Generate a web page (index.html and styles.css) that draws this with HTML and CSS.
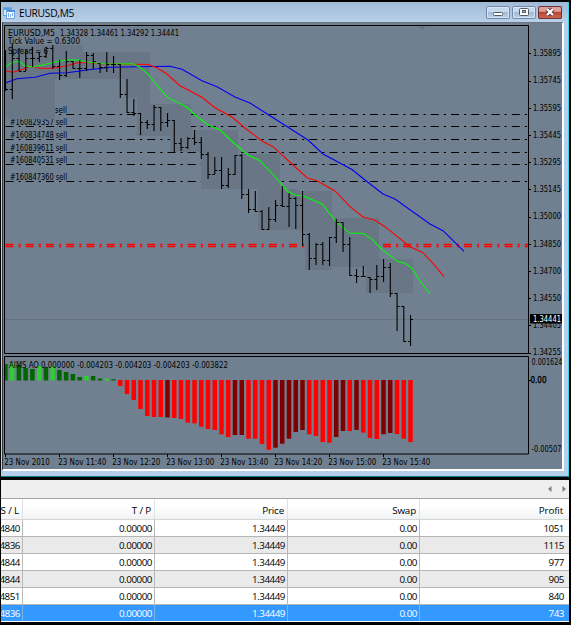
FILE: index.html
```html
<!DOCTYPE html>
<html lang="en">
<head>
<meta charset="utf-8">
<title>EURUSD,M5</title>
<link rel="stylesheet" href="styles.css">
</head>
<body>
<section class="window">
  <header class="titlebar">
    <svg class="app-icon" width="13" height="13" viewBox="0 0 13 13"><path d="M.5 1.5h8v8h-8z" fill="#d9edff" stroke="#6ba2e0"/><path d="M1 3h7" stroke="#5d9ae6" stroke-width="2"/><path d="M3.5 4.5h8v8h-8z" fill="#f8fcff" stroke="#6ba2e0"/><path d="M4 5h8" stroke="#4f8fdd" stroke-width="2"/><path d="M5.5 7v4M7.500 8v3M9.500 7v3" stroke="#79a9e8" fill="none"/></svg>
    <h1>EURUSD,M5</h1>
    <div class="controls">
      <span class="btn"><svg width="24" height="13"><rect x="7.5" y="6.5" width="9" height="3" rx="1" fill="#fff" stroke="#555b66"/></svg></span>
      <span class="btn"><svg width="24" height="13"><rect x="7.5" y="2.5" width="9" height="7" rx="1" fill="#fff" stroke="#555b66"/><rect x="10.5" y="4.5" width="3" height="2" fill="#a8bdd6" stroke="#555b66"/></svg></span>
      <span class="btn close"><svg width="24" height="13"><path d="M9 3l6 6M15 3l-6 6" stroke="#673944" stroke-width="4"/><path d="M9 3l6 6M15 3l-6 6" stroke="#fff" stroke-width="2.2"/></svg></span>
    </div>
  </header>
  <div class="frame">
    <svg class="chart" id="chart" width="558" height="446" viewBox="4 23 558 446">
      <g id="orders"></g>
      <g class="order-names">
        <text x="55" y="113" textLength="12">sell</text>
        <text x="10" y="124.5" textLength="57">#160829357 sell</text>
        <text x="10" y="138" textLength="57">#160834748 sell</text>
        <text x="10" y="150.5" textLength="57">#160839611 sell</text>
        <text x="10" y="162.5" textLength="57">#160840531 sell</text>
        <text x="10" y="180" textLength="57">#160847360 sell</text>
      </g>
      <g id="patches" class="patch"></g>
      <path class="stop" d="M5.5 244.500H305M383 244.500H528M5.500 246.500H305M383 246.500H528"/>
      <path d="M5 319.5H528" stroke="#65737f"/>
      <path class="ma blue" d="M6 82.7L17 78.7 35 77.3 50 73.3 67 72.7 87 70 110 67.3 137 66.7 170 66.3 182 69.3 202 80.7 217 86.7 235 97 250 103 270 115.7 308 140 323 154 352 169.5 365 180 383 194 395 199 430 224 443 230.7 464 251.3"/>
      <path class="ma red" d="M6 71L13 72.3 23 69.3 30 66 40 68.3 53 68.3 67 65.7 77 62.7 90 62.7 100 63.7 148 64.5 157 67.7 167 74 180 85.7 202 97.3 215 107.7 232 117 245 128 262 141 273 146.7 292 164 307 177.7 317 180.7 335 191 350 206.7 363 217 375 220.3 385 226.7 410 246.7 423 252.7 433 263.3 444 276.7"/>
      <path class="ma green" d="M6 66.7L12 62.3 19 61.3 25 66 33 66.7 43 65 55 62 67 60 78 60 88 62.3 107 64 133 63.7 140 67.3 148 74 158 86.7 168 97.7 187 107.3 195 115 208 124.7 220 130 235 144 248 155 260 160.7 278 180 288 191.7 296 195.3 303 195.7 322 204 337 222.7 350 233.3 363 233.3 372 239.3 382 249.3 397 261.3 405 263.3 412 268.3 420 281 430 294"/>
      <path id="candles" class="candle"/>
      <g id="histogram"></g>
      <path class="border" d="M4.5 25.5H528.5V353.5H4.5zM4.5 356.5H528.5V454H4.5z"/>
      <path d="M419 26.5h7l-3.5 3z" fill="#65737f"/>
      <path id="axis" class="border"/>
      <text x="8" y="35.5" textLength="47">EURUSD,M5</text><text x="60" y="35.5" textLength="119">1.34328 1.34461 1.34292 1.34441</text>
      <text x="8" y="44" textLength="72">Tick Value = 0.6300</text>
      <text x="8" y="54" textLength="40">Spread = 6</text>
      <text x="9" y="368" textLength="219">AIMS AO 0.000000 -0.004203 -0.004203 -0.004203 -0.003822</text>
      <g id="labels"></g>
      <path d="M530 314h32v9.5h-32z"/>
      <text class="current" x="533" y="321.7" textLength="28">1.34441</text>
      <text x="531.5" y="365.3" textLength="31">0.001624</text>
      <text x="530.5" y="383" textLength="16" stroke="#000" stroke-width=".3">0.00</text>
      <text x="531.5" y="451.5" textLength="30">-0.00507</text>
    </svg>
  </div>
</section>
<section class="terminal">
  <div class="toolbar"><svg width="20" height="8"><path d="M4.500 1v6L1 4zM15.500 1v6L19 4z" fill="#7d7d7d"/></svg></div>
  <div class="row head"><span>S / L</span><span>T / P</span><span>Price</span><span>Swap</span><span>Profit</span></div>
  <div class="row"><span>4840</span><span>0.00000</span><span>1.34449</span><span>0.00</span><span>1051</span></div>
  <div class="row alt"><span>4836</span><span>0.00000</span><span>1.34449</span><span>0.00</span><span>1115</span></div>
  <div class="row"><span>4844</span><span>0.00000</span><span>1.34449</span><span>0.00</span><span>977</span></div>
  <div class="row alt"><span>4844</span><span>0.00000</span><span>1.34449</span><span>0.00</span><span>905</span></div>
  <div class="row"><span>4851</span><span>0.00000</span><span>1.34449</span><span>0.00</span><span>840</span></div>
  <div class="row selected"><span>4836</span><span>0.00000</span><span>1.34449</span><span>0.00</span><span>743</span></div>
</section>
<script src="chart.js"></script>
</body>
</html>
```
FILE: styles.css
```css
* { box-sizing: border-box; }
body { margin: 0; width: 571px; height: 625px; overflow: hidden; background: #000; font-family: "Open Sans", "Noto Sans", sans-serif; }
.window { margin: 2px 2px 0 1px; height: 475px; background: #b5cfea; border-right: 1px solid #39d7e9; border-bottom: 1px solid #167d88; }
.titlebar { height: 20px; display: flex; align-items: center; padding: 1px 6px 0 2px; background: linear-gradient(#a0b9d5, #b9d0e9); }
.titlebar h1 { margin: 0 0 0 3px; flex: 1; font-size: 10.3px; font-weight: 400; line-height: 18px; color: #000; letter-spacing: -.32px; }
.controls { display: flex; gap: 2px; }
.btn { width: 24px; height: 13px; border-radius: 2px; background: linear-gradient(#c5d8ec 45%, #a2bbd6 50%, #bdd4ea); box-shadow: inset 0 0 0 1px #7289a5, inset 0 0 0 2px #d6e5f3; }
.btn svg { display: block; }
.close { background: linear-gradient(#dca196 40%, #bb4732 50%, #cc6e55); box-shadow: inset 0 0 0 1px #6b3038; }
.frame { margin: 0 4px 0 1px; width: 562px; height: 449px; padding: 0 3px 3px 1px; border: solid #fff; border-width: 0 2px 2px 0; border-top: 1px solid #6d7781; border-left: 1px solid #303a44; background: #708090; }
.chart { display: block; background: #708090; }
.chart text { font-family: "DejaVu Sans Condensed", "DejaVu Sans", sans-serif; font-size: 8px; fill: #000; }
.chart .current { fill: #fff; }
.patch { fill: #687686; }
.order { stroke: #000; stroke-width: 1; stroke-dasharray: 8 5 2.25 5; }
.stop { stroke: #f00; stroke-width: 1.7; stroke-dasharray: 8 5 2.25 5; fill: none; }
.ma { fill: none; stroke-width: 1.05; }
.blue { stroke: #0000f0; }
.red { stroke: #f00; }
.green { stroke: #0f0; }
.candle { stroke: #000; stroke-width: 1.1; fill: none; }
.border { stroke: #000; stroke-width: 1; fill: none; }
.terminal { margin: 3px 2px 0 1px; background: #fff; }
.toolbar { height: 19px; background: #efefef; border-bottom: 1px solid #a5a5a5; display: flex; align-items: center; justify-content: flex-end; padding-right: 2px; }
.row { display: grid; grid-template-columns: 22px 132px 133px 132px 1fr; height: 17px; font-size: 9.8px; letter-spacing: -.45px; line-height: 18px; color: #000; border-bottom: 1px solid #b5b5b5; }
.row span { border-right: 1px solid #b9b9b9; padding-right: 2px; display: flex; justify-content: flex-end; white-space: nowrap; height: 16px; }
.row span:last-child { border-right: 0; padding-right: 5px; }
.row span:first-child { overflow: hidden; }
.head { height: 21px; line-height: 23px; letter-spacing: -.15px; background: linear-gradient(#fff 40%, #f1f2f4); border-bottom: 1px solid #d5d5d5; }
.head span { height: 20px; border-color: #e2e3e5; padding-right: 3px; }
.head span:last-child { padding-right: 6px; }
.alt { background: #eaeaea; }
.selected { background: #3399ff; color: #fff; border-bottom-color: #fff; }
.selected span { border-color: #77b4ee; }
```
FILE: chart.js
```js
const NS = "http://www.w3.org/2000/svg";
const add = (parent, tag, attrs, text) => {
  const el = document.createElementNS(NS, tag);
  for (const k in attrs) el.setAttribute(k, attrs[k]);
  if (text) el.textContent = text;
  document.getElementById(parent).appendChild(el);
};
const barX = i => 12.3 + 6.75 * i;

[114.5, 126.5, 139.5, 152.5, 164.5, 181.5].forEach(y =>
  add("orders", "path", { class: "order", d: `M5.5 ${y}H528` }));

// left, top, right, bottom of each shaded session block
[[5,45,55,119],[55,45,83,79],[83,52,150,79],[125,79,137,98],[137,78,150,136],[150,104,191,136],[170,136,191,152],
 [191,130,238,152],[201,152,238,189],[238,154,280,189],[258,189,298,230],[280,191,332,230],[305,230,332,270],
 [332,218,379,267],[366,259,413,293]].forEach(([x, y, r, b]) =>
  add("patches", "rect", { x, y, width: r - x, height: b - y }));

// high, low, close positions, one entry per candle starting left of the first full bar
const candles = [[50,91,89],[43,99,58],[48,71,71],[50,71,58],[47,67,58],[52,62,56],[50,58,48],[45,69,66],[60,80,75],[51,77,61],[61,69,68],[60,78,68],[52,71,55],[53,69,61],[63,73,67],[52,72,64],[56,73,64],[64,98,94],[79,113,112],[99,116,113],[113,135,122],[120,129,124],[105,131,107],[107,131,122],[113,127,120],[120,152,143],[138,151,147],[137,149,138],[130,145,142],[137,159,154],[152,179,174],[157,174,170],[157,189,185],[168,188,174],[155,175,155],[154,199,194],[189,213,209],[191,212,211],[210,230,229],[207,230,219],[200,222,205],[186,207,206],[193,227,198],[197,229,205],[191,246,234],[233,270,258],[243,265,244],[242,265,260],[237,266,237],[219,243,222],[222,252,244],[237,276,275],[269,283,276],[266,277,276],[277,293,279],[265,290,276],[259,282,267],[263,297,293],[293,331,306],[306,342,341],[315,346,319]];
document.getElementById("candles").setAttribute("d", candles.map(([h, l, c], n) => {
  const x = barX(n - 1), o = n ? candles[n - 1][2] : h + 10;
  const open = Math.min(Math.max(o, h), l);
  return `M${x} ${h}V${l}M${x - 2.5} ${open + .5}H${x}M${x} ${c + .5}h2.5`;
}).join(""));

const up = [[364,"d"],[363,"l"],[365,"d"],[368,"d"],[369,"d"],[366,"l"],[367,"d"],[366.5,"l"],[370,"d"],[372,"d"],[374,"d"],[377,"d"],[376,"l"],[376,"d"],[378.5,"d"],[378.5,"l"],[379.3,"d"]];
up.forEach(([y, c], n) => {
  const x = Math.max(barX(n - 1) - 2.4, 5);
  add("histogram", "rect", { x, y, width: barX(n - 1) + 2.1 - x, height: 380.5 - y, fill: c === "d" ? "#006400" : "#32cd32" });
});
const down = [386,394,400,409,416,417,417,417.5,418,419,422.7,423.3,426.7,429,430,434.3,437,435,435,438.7,438.7,444,449.7,447.7,443.7,438.7,432,430,434.3,436,442,442.7,437,431,431,430,432.7,438,439,434.3,433,434,438.7,442];
const dark = [23,33,34,39,40,41,42,43,48,49,51,55,56];
down.forEach((b, n) => {
  const i = n + 16;
  add("histogram", "rect", { x: barX(i) - 2.3, y: 380, width: 4.5, height: b - 380, fill: dark.includes(i) ? "#800000" : "#f00" });
});

const prices = ["1.35895","1.35745","1.35595","1.35445","1.35295","1.35145","1.35000","1.34850","1.34700","1.34550","1.34405","1.34255"];
let ticks = "M529 380.5h2";
prices.forEach((p, n) => {
  const y = 53.3 + 27.2 * n;
  ticks += `M529 ${Math.round(y) + .5}h2`;
  add("labels", "text", { x: 533, y: y + 2.8, textLength: 28 }, p);
});
["23 Nov 2010","23 Nov 11:40","23 Nov 12:20","23 Nov 13:00","23 Nov 13:40","23 Nov 14:20","23 Nov 15:00","23 Nov 15:40"].forEach((t, n) => {
  ticks += `M${Math.round(5 + 54 * n) + .5} 454v3`;
  add("labels", "text", { x: 4.3 + 54 * n, y: 464.7, textLength: n ? 48 : 45.5 }, t);
});
document.getElementById("axis").setAttribute("d", ticks);
document.querySelectorAll(".chart text").forEach(t => t.setAttribute("lengthAdjust", "spacingAndGlyphs"));
```
